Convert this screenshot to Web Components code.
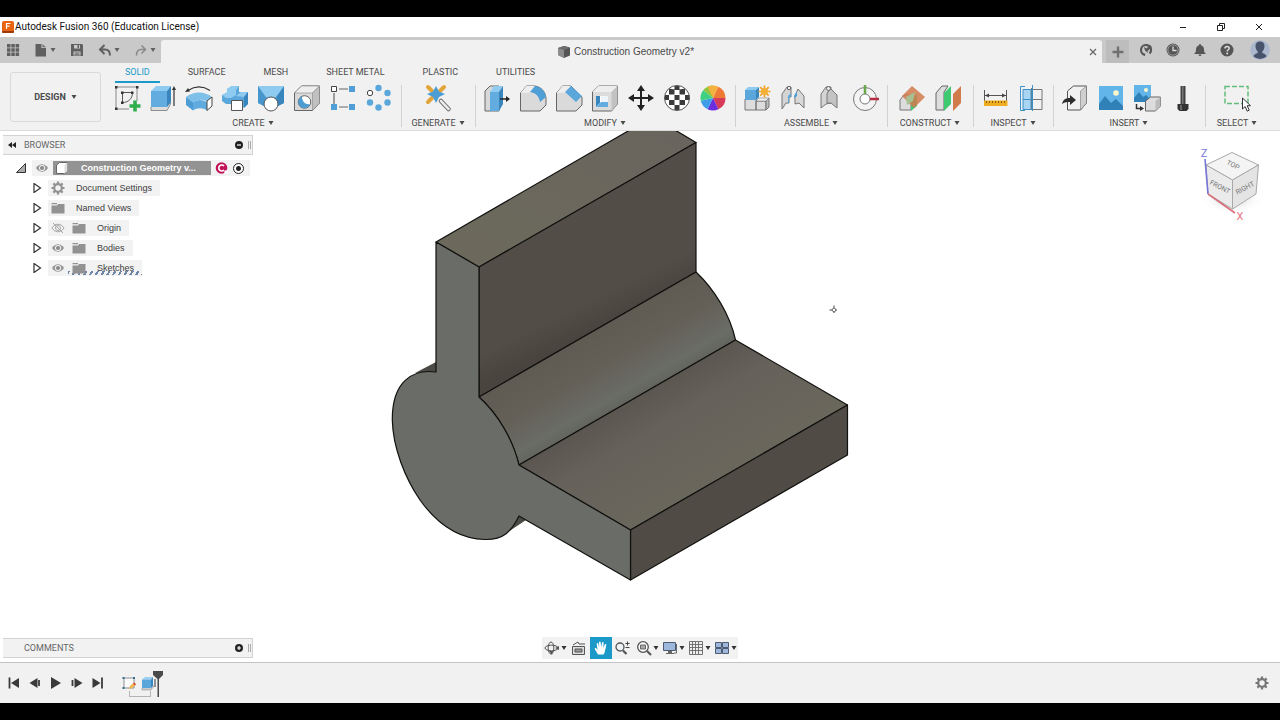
<!DOCTYPE html>
<html lang="en">
<head>
<meta charset="utf-8">
<meta name="viewport" content="width=device-width, initial-scale=1">
<title>Autodesk Fusion 360 (Education License)</title>
<style>
  html, body { margin: 0; height: 100%; }
  body {
    --blue: #1b9ac9; --panel: #f1f1f1; --ink: #4a4a4a;
    font: 9px/16px Roboto, "Liberation Sans", sans-serif;
    color: var(--ink); background: #000;
  }
</style>
</head>
<body>
<fusion-app></fusion-app>

<script>
const ICONS = {
  /* ---- application frame ---- */
  logo: [12, '<rect width="12" height="12" rx="2" fill="#e8640f"/><path d="M0 10h12v1a1 1 0 0 1-1 1H1a1 1 0 0 1-1-1z" fill="#9c3a05"/><path d="M4.500 8V2.500H8.500M4.500 5.200h3" stroke="#fff" stroke-width="1.200" fill="none"/>'],
  min: [12, '<path d="M3 6.500h6" stroke="#222"/>'],
  restore: [12, '<path d="M2.500 4.500h5v5h-5zM4.500 4.500v-2h5v5H7.500" stroke="#222" fill="none"/>'],
  close: [12, '<path d="M3 3l6 6M9 3l-6 6" stroke="#222" fill="none"/>'],
  tabclose: [12, '<path d="M3 3l6 6M9 3l-6 6" stroke="#666" stroke-width="1.200" fill="none"/>'],
  apps: [14, '<g fill="#606060"><path d="M1 1h3.500v3.500H1zM5.300 1h3.500v3.500H5.300zM9.600 1h3.500v3.500H9.600zM1 5.300h3.500v3.500H1zM5.300 5.300h3.500v3.500H5.300zM9.600 5.300h3.500v3.500H9.600zM1 9.600h3.500v3.500H1zM5.300 9.600h3.500v3.500H5.300zM9.600 9.600h3.500v3.500H9.600z"/></g>'],
  file: [14, '<path d="M1.500 1h6v4h4.500v8.500H1.500z" fill="#606060"/><path d="M8.500 1l3.500 3.300H8.500z" fill="#707070"/>'],
  save: [14, '<path fill-rule="evenodd" d="M1 1h11l1 1v11H1zM4 2v3.500h6V2zM3.500 8.500v4h7v-4z" fill="#606060"/><path d="M7.500 2h1.500v3H7.500zM4.500 9.500h5v1h-5zM4.500 11.200h5v1h-5z" fill="#606060"/>'],
  undo: [14, '<path d="M6.500 2L2 6.500 6.500 11M2.500 6.500H7c3.500 0 5 2 5 6" fill="none" stroke="#606060" stroke-width="2"/>'],
  redo: [14, '<path d="M7.500 2.500l4 4-4 4M11 6.500H7c-3 0-4.500 2-4.500 6" fill="none" stroke="#8a8a8a" stroke-width="1.500"/>'],
  doc: [14, '<path d="M1 3l6-2 6 1.500v8L7 13l-6-3z" fill="#555"/><path d="M1 3l6 2v8l-6-3z" fill="#8c8c8c"/><path d="M1 3l6-2 6 1.500L7 5z" fill="#6f6f6f"/>'],
  plus: [14, '<path d="M7 1.500v11M1.500 7h11" stroke="#707070" stroke-width="2.400"/>'],
  ext: [14, '<circle cx="7" cy="7" r="5" fill="none" stroke="#555" stroke-width="2.200" stroke-dasharray="26 5" transform="rotate(100 7 7)"/><path d="M5 4l2.500 1.500L11 2l2 2-4.500 4L9 10 6 7.500z" fill="#555"/>'],
  clock: [14, '<circle cx="7" cy="7" r="6.500" fill="#555"/><circle cx="7" cy="7" r="5.200" fill="none" stroke="#aaa" stroke-width=".8"/><path d="M7 3.500V7.500h3.500" stroke="#ddd" stroke-width="1.300" fill="none"/>'],
  bell: [14, '<path d="M7 1c1 0 1 .8 1 1.200 2 .6 3 2.200 3 4.300 0 2.500.5 3 2 4.500H1c1.500-1.500 2-2 2-4.500 0-2.100 1-3.700 3-4.300C6 1.800 6 1 7 1z" fill="#555"/><path d="M5.500 11.500h3a1.500 1.500 0 0 1-3 0z" fill="#555"/>'],
  help: [14, '<circle cx="7" cy="7" r="6.500" fill="#555"/><path d="M5 5.500C5 2.800 9.200 3 9.200 5.300 9.200 6.800 7.200 6.800 7.200 8.500" stroke="#ddd" stroke-width="1.500" fill="none"/><circle cx="7.200" cy="10.500" r="1" fill="#ddd"/>'],
  avatar: [20, '<circle cx="10" cy="10" r="9.800" fill="#aab7cc"/><path d="M10 1.500c3 0 4.700 2 4.500 4.800-.1 2.300-.8 4-2.200 5.200v1.500c2 .8 3.500 1.500 4.400 3.200A9.700 9.700 0 0 1 3.300 16.200C4.200 14.500 5.700 13.800 7.700 13v-1.500C6.300 10.300 5.600 8.600 5.500 6.300 5.300 3.500 7 1.500 10 1.500z" fill="#46536b"/>'],
  caret: [6, '<path d="M.5 1h5L3 5z" fill="currentColor"/>'],

  /* ---- create ---- */
  sketch: [28, '<path d="M4 3h19M3 4v20M24 4v13M4 25h12" stroke="#888" fill="none"/><path d="M9.500 8.500v10M9.500 8.500h10c0 6-4 10-10 10" stroke="#555" fill="none"/><g fill="#333"><path d="M2 2h2.500v2.500H2zM23 2h2.500v2.500H23zM2 23.500h2.500V26H2zM8 7.500h2.500V10H8zM18 7.500h2.500V10H18zM8 17.500h2.500V20H8z"/></g><path d="M22 16.500v11M16.500 22h11" stroke="#2fae4b" stroke-width="3.600"/>'],
  extrude: [28, '<path d="M2 23l4-4h16l-4 7.500H2z" fill="#ddd" stroke="#777" stroke-width=".8"/><path d="M2 7l5-5h15l-4 5z" fill="#8fcaf0"/><path d="M2 7h16v16H2z" fill="#63ace0"/><path d="M18 7l4-5v16l-4 5z" fill="#3886bd"/><path d="M25 22V5" stroke="#333" stroke-width="1.200"/><path d="M25 2l-2 4h4z" fill="#333"/>'],
  revolve: [28, '<path d="M3 6.500C10 2 18 2 25 6.500" stroke="#333" stroke-width="1.200" fill="none"/><path d="M0 8l3-4 2 3.500z" fill="#333"/><path d="M1 13C8 7 20 7 27 13l-5 5c-4-3-10-3-14 1z" fill="#7fc0ea"/><path d="M1 13l7 5.500v8L1 21z" fill="#4c9dd4"/><path d="M8 18.500c4-3.500 10-3.500 14 0v8c-4-3-10-3-14 0z" fill="#5fabdf"/><path d="M22 17l5-4v9l-5 4.500z" fill="#fff" stroke="#444"/>'],
  sweep: [28, '<path d="M1 11l5-2V5l5-3h7v6h9v12l-5 4h-9l-3-4H5l-4-3z" fill="#5ba6da"/><path d="M1 11l5-3V5l5-3h7l-3 4v5l-5 3H5z" fill="#8fcaf0"/><path d="M15 12l5-4h7l-4 5z" fill="#8fcaf0"/><path d="M23 13l4-5v12l-4 4z" fill="#3886bd"/><path d="M10.500 16.500h11v10h-11z" fill="#fff" stroke="#555"/>'],
  loft: [28, '<path d="M1 2h26v17l-6 3H7l-6-3z" fill="#63ace0"/><path d="M1 2l8 11-2 9-6-3z" fill="#4795cd"/><path d="M27 2l-8 11 2 9 6-3z" fill="#3886bd"/><path d="M1 2h26l-8 11H9z" fill="#8fcaf0"/><circle cx="14" cy="20" r="7" fill="#fff" stroke="#555"/>'],
  hole: [28, '<path d="M1.500 9l7-7h18v17l-7 7.500h-18z" fill="#d9d9d9" stroke="#666"/><path d="M1.500 9l7-7h18l-7 7z" fill="#eee" stroke="#888" stroke-width=".6"/><path d="M19.500 9l7-7v17l-7 7.500z" fill="#c0c0c0" stroke="#888" stroke-width=".6"/><circle cx="11.500" cy="18" r="6.300" fill="#fff" stroke="#666"/><path d="M9 12.500a6 6 0 1 0 8 7.500c-4 1-8-2-8-7.500z" fill="#4c9dd4"/>'],
  rectpat: [28, '<path d="M5 9v11M10 5h9M10 23h9" stroke="#666" stroke-width="1.200"/><path d="M2.500 2.500h5v5h-5z" fill="#fff" stroke="#444"/><path d="M20 2h6v6h-6zM2 20h6v6H2zM20 20h6v6h-6z" fill="#4f9fd6"/>'],
  circpat: [28, '<g fill="#5ba6da"><circle cx="13.500" cy="4" r="3.200"/><circle cx="22.500" cy="9" r="3.200"/><circle cx="22.500" cy="18.500" r="3.200"/><circle cx="13.500" cy="23.500" r="3.200"/><circle cx="5" cy="18.500" r="3.200"/></g><circle cx="5" cy="9" r="2.700" fill="#fff" stroke="#444"/>'],
  /* ---- generate ---- */
  wand: [28, '<path d="M4 3l4 4M20 3l-4 4M4 18l4-4" stroke="#e3a43a" stroke-width="4" stroke-linecap="round"/><path d="M12 2l3 5.500L21 10l-6 3-3 6-3-6-6-3 6-2.500z" fill="#4c9dd4"/><path d="M17 17l7.500 8" stroke="#777" stroke-width="4.500" stroke-linecap="round"/><path d="M17 17l7.500 8" stroke="#eee" stroke-width="2.500" stroke-linecap="round"/>'],
  /* ---- modify ---- */
  presspull: [28, '<path d="M2 7l5-5h9v25H2z" fill="#d8d8d8" stroke="#666"/><path d="M7 8l4-6h9l-4 6z" fill="#8fcaf0"/><path d="M7 8h9v19H7z" fill="#63ace0"/><path d="M16 8l4-6v18l-4 7z" fill="#3886bd"/><path d="M17 15h7" stroke="#222" stroke-width="1.500"/><path d="M23 12l4 3-4 3z" fill="#222"/>'],
  fillet: [28, '<path d="M1.500 9l6-7H16c6 1 10 5 11 12v7l-6 6H1.500z" fill="#dadada" stroke="#666"/><path d="M1.500 9l6-7H16l-5 6.500z" fill="#eee"/><path d="M11 8l5-6c6 1 10 5 11 11l-6 5c-1-6-4-9-10-10z" fill="#4f9fd6"/>'],
  chamfer: [28, '<path d="M1.500 9l6-7H16l11 11v8l-6 6H1.500z" fill="#dadada" stroke="#666"/><path d="M1.500 9l6-7H16l-5 6.500z" fill="#eee"/><path d="M10 8l6-6 11 10-6 6z" fill="#5ba6da"/>'],
  shell: [28, '<path d="M1.500 8l6-6h19v18l-6 7h-19z" fill="#dcdcdc" stroke="#666"/><path d="M1.500 8l6-6h19l-6 6z" fill="#eee"/><path d="M20.500 8l6-6v18l-6 7z" fill="#c2c2c2"/><path d="M5 12h12v11H5z" fill="#fff"/><path d="M5 12h4v7l-4 4z" fill="#3886bd"/><path d="M5 23l5-5h7v5z" fill="#63ace0"/><path d="M10 12h7v6h-7z" fill="#eef5fa"/>'],
  move: [28, '<path d="M14 4v20M4 14h20" stroke="#222" stroke-width="2"/><path d="M14 1l-4 6h8zM14 27l-4-6h8zM1 14l6-4v8zM27 14l-6-4v8z" fill="#222"/>'],
  checker: [28, '<circle cx="14" cy="14" r="12.500" fill="#fff"/><path d="M11.500 2h5v4h-5zM6 4.500l5.500 1v5H6zM16.500 5.500l5.500-1v6h-5.500zM11.500 11h5v5h-5zM2 11h4v5H2zM22 11h4.500v5H22zM6 16h5.500v5H6zM16.500 16H22v5h-5.500zM11.500 21h5v5h-5z" fill="#3b3b3b"/><circle cx="14" cy="14" r="12.500" fill="none" stroke="#555"/>'],
  wheel: [28, '<g><path d="M14 14V1.500A12.500 12.500 0 0 0 4.200 6.200z" fill="#8fc63f"/><path d="M14 14L8.600 2.700a12.500 12.500 0 0 1 10.800 0z" fill="#f5b13d"/><path d="M14 14l5.400-11.300A12.500 12.500 0 0 1 26.500 14z" fill="#ee7a35"/><path d="M14 14h12.500a12.500 12.500 0 0 1-7.100 11.300z" fill="#d63b59"/><path d="M14 14l5.400 11.300a12.500 12.500 0 0 1-10.800 0z" fill="#6a2de0"/><path d="M14 14L8.600 25.300A12.500 12.500 0 0 1 1.800 16.800z" fill="#3f9ce8"/><path d="M14 14L1.800 16.800A12.500 12.500 0 0 1 4.200 6.200z" fill="#3ed183"/></g>'],
  /* ---- assemble ---- */
  newcomp: [28, '<path d="M2 15h11v11H2zM13 17h10v9H13z" fill="#ddd" stroke="#777"/><path d="M23 17l3-3v9l-3 3z" fill="#bbb" stroke="#777"/><path d="M13 17l3-3h10l-3 3z" fill="#f3f3f3" stroke="#777" stroke-width=".6"/><path d="M2 6l3-3h11l-3 3z" fill="#8fcaf0"/><path d="M2 6h11v10H2z" fill="#5ba6da"/><path d="M13 6l3-3v10l-3 3z" fill="#3886bd"/><path d="M21.500 1.500v12M15.500 7.500h12M17.200 3.200l8.500 8.500M25.700 3.200l-8.500 8.500" stroke="#eda22c" stroke-width="1.700"/><circle cx="21.500" cy="7.500" r="3.500" fill="#f3b038"/>'],
  joint: [28, '<path d="M3 10l5-7h4v10h-2v6H7l-4 6z" fill="#d4d4d4" stroke="#777"/><path d="M9 12l3-3v4h-2v6H9z" fill="#5ba6da"/><path d="M16 12l3-7 6 7v12l-5-5-4 1z" fill="#d8d8d8" stroke="#777"/><path d="M15 12l3-5v5l-3 2z" fill="#4f9fd6"/><circle cx="10" cy="4" r="1.700" fill="#eee" stroke="#666"/>'],
  asbuilt: [28, '<path d="M6 10l5-7h5v16l-5 1-5 4z" fill="#d4d4d4" stroke="#777"/><path d="M15 4l7 7v13l-6-5h-4v-9z" fill="#c4c4c4" stroke="#777"/><circle cx="13.500" cy="4.500" r="2" fill="#eee" stroke="#666"/>'],
  jorigin: [28, '<circle cx="14" cy="15" r="11.500" fill="#f4f4f4" stroke="#777"/><circle cx="14" cy="15" r="5" fill="#fff" stroke="#777"/><path d="M14 1v9" stroke="#69a84b" stroke-width="2.500"/><path d="M19 15h9" stroke="#b52f41" stroke-width="2.500"/>'],
  /* ---- construct ---- */
  offset: [28, '<path d="M2 16l4-5h10l-3 5v10H2z" fill="#ddd" stroke="#777"/><path d="M13 16l6-6v12l-6 5z" fill="#45c878"/><path d="M14 2L27 13 16 24 4 12z" fill="#d17a4b" fill-opacity=".85"/><path d="M8 13l9-5-2 9-6 4z" fill="#a7bf91"/>'],
  midplane: [28, '<path d="M2 9l6-7h6l-4 6v18H2z" fill="#ddd" stroke="#666"/><path d="M10 9l7-7v18l-7 7z" fill="#3fca72"/><path d="M19 10l8-8v17l-8 8z" fill="#d17a4b"/>'],
  /* ---- inspect ---- */
  measure: [28, '<path d="M3.500 6v11M25.500 6v11M4 11.500h21" stroke="#555"/><path d="M4 11.500l4-2v4zM25 11.500l-4-2v4z" fill="#444"/><path d="M3 16.500h23.500v5.500H3z" fill="#efae22"/><path d="M5 18h20" stroke="#8c5c00" stroke-width="2" stroke-dasharray="1 2"/>'],
  section: [28, '<path d="M12 5.500h13v20H12M12 15.500h13M14.500 4v22" stroke="#777" fill="none"/><path d="M6 5h8v21H6z" fill="#a9d5f3"/><path d="M8 2.500H3.500v24H8M6 5.500h8v20H6zM6 15.500h8M15.500 1v26" stroke="#3b91c8" fill="none"/>'],
  /* ---- insert ---- */
  derive: [28, '<path d="M6.500 7l6-5h13v17l-6 7H6.500z" fill="#f1f1f1" stroke="#555"/><path d="M19.500 7l6-5v17l-6 7z" fill="#cfcfcf" stroke="#777" stroke-width=".6"/><path d="M1 20c1-4 3-6 8-6v-3l6 5-6 5v-3c-3 0-5 0-8 2z" fill="#2e2e2e"/>'],
  canvas: [28, '<path d="M2 2h24v24H2z" fill="#61b5e8"/><path d="M2 20l6-8 6 7 5-4 7 7v4H2z" fill="#2f81b8"/><circle cx="19" cy="9" r="2.800" fill="#fff5cb"/>'],
  decal: [28, '<path d="M1 1h17v17H1z" fill="#61b5e8"/><path d="M1 14l5-6 4 5 3-2 5 5v2H1z" fill="#2f81b8"/><circle cx="13" cy="6" r="2" fill="#fff5cb"/><path d="M12.500 17l5-4h10v9l-5 5h-10z" fill="#ddd" stroke="#666"/><path d="M22.500 17l5-4v9l-5 5z" fill="#bbb"/><path d="M3.500 20v4.500H8" stroke="#333" stroke-width="1.500" fill="none"/><path d="M7 22l4 2.500L7 27z" fill="#333"/>'],
  bolt: [28, '<path d="M11.500 2h5v18h-5z" fill="#414141"/><path d="M13 2h1.500v18H13z" fill="#777"/><path d="M8.500 20h11v5l-2 2h-7l-2-2z" fill="#333"/><path d="M11 21h2v5h-2z" fill="#666"/>'],
  select: [28, '<path d="M2 2.500h23v17H2z" fill="none" stroke="#63bd7b" stroke-width="1.500" stroke-dasharray="5 2"/><path d="M19.500 14v11l2.700-2.500 2 4.700 2-1-2-4.500h3.300z" fill="#fff" stroke="#333"/>'],

  /* ---- browser ---- */
  collapse: [10, '<path d="M5 2v6L1 5zM9 2v6L5 5z" fill="#222"/>'],
  minus: [8, '<circle cx="4" cy="4" r="4" fill="#222"/><path d="M2 4h4" stroke="#fff" stroke-width="1.200"/>'],
  add: [8, '<circle cx="4" cy="4" r="4" fill="#222"/><path d="M2 4h4M4 2v4" stroke="#fff" stroke-width="1.200"/>'],
  grip: [8, '<path d="M4.500 0v8M6.500 0v8" stroke="#aaa"/>'],
  open: [10, '<path d="M9.500.5v9H.5z" fill="#aaa" stroke="#333"/>'],
  closed: [10, '<path d="M2 .500L8.500 5 2 9.500z" fill="#fff" stroke="#333" stroke-width="1.200"/>'],
  eye: [14, '<path d="M1 7c3-5 9-5 12 0-3 5-9 5-12 0z" fill="#999"/><circle cx="7" cy="7" r="3" fill="#f2f2f2"/><circle cx="7" cy="7" r="2" fill="#888"/>'],
  hidden: [14, '<path d="M1 7c3-5 9-5 12 0-3 5-9 5-12 0z" fill="none" stroke="#a5a5a5"/><circle cx="7" cy="7" r="2.500" fill="none" stroke="#a5a5a5"/><path d="M2 2l10 10" stroke="#a5a5a5"/>'],
  folder: [14, '<path d="M.5 2h5.500v1.200H.5zM7 3h6.500v9.500H.5V4.500h5.500z" fill="#929292"/>'],
  gear: [14, '<circle cx="7" cy="7" r="3.800" fill="none" stroke="currentColor" stroke-width="2.200"/><path d="M7 .5v2.500M7 11v2.500M.5 7H3M11 7h2.500M2.400 2.400l1.800 1.800M9.800 9.800l1.800 1.800M2.400 11.600l1.800-1.800M9.800 4.200l1.800-1.800" stroke="currentColor" stroke-width="2.200"/>'],
  body: [14, '<path d="M1.500 4l3-2.500h8V10l-3 2.500h-8z" fill="#fff" stroke="#666"/><path d="M9.500 4l3-2.500V10l-3 2.500z" fill="#ddd"/>'],
  cbadge: [14, '<circle cx="6.500" cy="7" r="5.800" fill="#c0135a"/><path d="M9 5a3 3 0 1 0 0 4" stroke="#fff" stroke-width="1.600" fill="none"/><circle cx="11" cy="11" r="1.800" fill="#fff"/>'],

  /* ---- navigation ---- */
  orbit: [16, '<ellipse cx="7.500" cy="8" rx="6.500" ry="2.800" fill="none" stroke="#555"/><ellipse cx="7" cy="8" rx="2.800" ry="6" fill="none" stroke="#555"/><path d="M11 8l4-2v4zM5 11l3 4 1-4z" fill="#555"/>'],
  lookat: [16, '<path d="M1.500 6.500h12v8h-12z" fill="#ddd" stroke="#555"/><path d="M4 9h7v3H4z" fill="#999" stroke="#555"/><path d="M2 5l5-3 1 2h6" stroke="#555" fill="none"/>'],
  hand: [16, '<path d="M5 14.500L2 9.500c-.8-1.400.7-1.900 1.400-1L4.500 10 3.700 4c-.1-1.300 1.300-1.500 1.600-.3L6.200 7.500 6 2.500c0-1.300 1.600-1.300 1.700 0L8.200 7.300 9 2.700c.2-1.200 1.700-1 1.600.2L10.300 8l1.500-3.500c.5-1.100 1.800-.6 1.500.5L12 11c-.3 1.500-.7 2.500-1.500 3.500z" fill="#fff"/>'],
  zoom: [16, '<circle cx="5" cy="7" r="4" fill="#eef3f8" stroke="#555" stroke-width="1.300"/><path d="M8 10.500L11.500 14" stroke="#555" stroke-width="2.200"/><path d="M10.500 3.500h4M12.500 1.500v4M10.500 7.500h4" stroke="#444"/>'],
  window: [16, '<circle cx="7" cy="7" r="5.300" fill="#fff" stroke="#555" stroke-width="1.300"/><path d="M4.500 5h5v4h-5z" fill="#aaa" stroke="#666"/><path d="M11 11l4 4" stroke="#555" stroke-width="2.200"/>'],
  display: [16, '<path d="M1.500 2.500h12v8h-12z" fill="#9eb7dc" stroke="#4d5a70"/><path d="M6 11h4v2h2v1H4v-1h2z" fill="#666"/><path d="M14.500 4v9H12" stroke="#666" fill="none"/>'],
  grid: [16, '<path d="M2 2h13v13H2z" fill="#eee"/><path d="M1.500 1.500h13v13h-13zM4.500 1.500v13M7.500 1.500v13M10.500 1.500v13M1.500 4.500h13M1.500 7.500h13M1.500 10.500h13" stroke="#666" fill="none" stroke-width=".9"/>'],
  views: [16, '<path d="M1.500 2.500h6v5h-6zM8.500 2.500h6v5h-6zM1.500 8.500h6v5h-6zM8.500 8.500h6v5h-6z" fill="#9eb7dc" stroke="#4d5a70"/>'],

  /* ---- timeline ---- */
  first: [14, '<path d="M2.500 1.500v11" stroke="#3a3a3a" stroke-width="1.800"/><path d="M12 2v10L4 7z" fill="#3a3a3a"/>'],
  prev: [14, '<path d="M9.500 2v10L1.500 7z" fill="#3a3a3a"/><path d="M11 4v6" stroke="#3a3a3a" stroke-width="1.800"/>'],
  play: [14, '<path d="M2 1v12l10-6z" fill="#3a3a3a"/>'],
  next: [14, '<path d="M4.500 2v10l8-5z" fill="#3a3a3a"/><path d="M2.500 4v6" stroke="#3a3a3a" stroke-width="1.800"/>'],
  last: [14, '<path d="M11 1.500v11" stroke="#3a3a3a" stroke-width="1.800"/><path d="M1.500 2v10l8-5z" fill="#3a3a3a"/>'],
  tsketch: [16, '<path d="M3 3h10v10H3z" fill="#fafafa" stroke="#777" stroke-width=".8"/><path d="M1.500 2h2v2h-2zM12 2h2v2h-2zM1.500 12h2v2h-2z" fill="#31708f"/><path d="M8 14l1-3 3.500-3 2 2-3.500 3z" fill="#f0b54c"/><path d="M12 8.500l1.500-1 1.500 2-1.200 1z" fill="#d9432f"/>'],
  textrude: [16, '<path d="M1 13l3-2h9l-3 4H1z" fill="#ccc" stroke="#888" stroke-width=".5"/><path d="M1 4.500L4 2h8L10 4.500z" fill="#9ad0f2"/><path d="M1 4.500h9V13H1z" fill="#5ba6da"/><path d="M10 4.500L12 2v8.500L10 13z" fill="#3886bd"/><path d="M14 4v8" stroke="#333"/>']
};

function define(tag, css, render) {
  customElements.define(tag, class extends HTMLElement {
    connectedCallback() {
      if (this.shadowRoot) return;
      const root = this.attachShadow({ mode: "open" });
      const reset = "*{box-sizing:border-box} button{font:inherit;color:inherit;background:none;border:0;padding:0;margin:0;display:flex;align-items:center;justify-content:center} a{color:inherit;text-decoration:none}";
      root.innerHTML = `<style>${reset}${css}</style>${render(this)}`;
    }
  });
}

define("fx-icon", ":host{display:block;flex:none} svg{display:block}", el => {
  const [box, art] = ICONS[el.getAttribute("name")];
  return `<svg width="${box}" height="${box}" viewBox="0 0 ${box} ${box}" aria-hidden="true">${art}</svg>`;
});

define("title-bar", `
  :host{display:flex;align-items:center;height:20px;background:#fff;color:#111;padding:0 2px;gap:1px;font:10px/20px Roboto,sans-serif}
  h1{font:inherit;margin:0;flex:1}
  .controls{display:flex}
  button{width:38px;height:20px}
`, () => `
  <fx-icon name="logo"></fx-icon><h1>Autodesk Fusion 360 (Education License)</h1>
  <div class="controls">
    <button aria-label="Minimize"><fx-icon name="min"></fx-icon></button>
    <button aria-label="Restore"><fx-icon name="restore"></fx-icon></button>
    <button aria-label="Close"><fx-icon name="close"></fx-icon></button>
  </div>`);

define("document-bar", `
  :host{display:flex;height:26px;padding-top:3px;background:#c9c9c9;color:#606060}
  .quick{display:flex;align-items:center;gap:14px;width:161px;padding:0 6px 3px}
  .quick button{gap:2px}
  .tab{flex:1;display:flex;align-items:center;background:var(--panel);border-radius:3px 3px 0 0;padding:0 3px}
  .name{flex:1;display:flex;align-items:center;justify-content:center;gap:3px;font:10px/20px "Liberation Sans",sans-serif;color:#4a4a4a}
  .account{display:flex;align-items:center;gap:13px;padding:0 10px 3px 4px}
  .new{width:23px;height:23px;background:#bdbdbd;margin:0 -3px -3px 0}
  .profile{margin-left:3px}
`, () => `
  <div class="quick">
    <button aria-label="Data panel"><fx-icon name="apps"></fx-icon></button>
    <button aria-label="File"><fx-icon name="file"></fx-icon><fx-icon name="caret"></fx-icon></button>
    <button aria-label="Save"><fx-icon name="save"></fx-icon></button>
    <button aria-label="Undo"><fx-icon name="undo"></fx-icon><fx-icon name="caret"></fx-icon></button>
    <button aria-label="Redo"><fx-icon name="redo"></fx-icon><fx-icon name="caret"></fx-icon></button>
  </div>
  <div class="tab">
    <span class="name"><fx-icon name="doc"></fx-icon>Construction Geometry v2*</span>
    <button aria-label="Close document"><fx-icon name="tabclose"></fx-icon></button>
  </div>
  <div class="account">
    <button class="new" aria-label="New design"><fx-icon name="plus"></fx-icon></button>
    <button aria-label="Extensions"><fx-icon name="ext"></fx-icon></button>
    <button aria-label="Job status"><fx-icon name="clock"></fx-icon></button>
    <button aria-label="Notifications"><fx-icon name="bell"></fx-icon></button>
    <button aria-label="Help"><fx-icon name="help"></fx-icon></button>
    <button class="profile" aria-label="Profile"><fx-icon name="avatar"></fx-icon></button>
  </div>`);

define("tool-group", `
  :host{display:flex;flex-direction:column;align-items:center;min-width:var(--group-width,0);padding:0 4px;
    background:linear-gradient(#d2d2d2,#d2d2d2) 0 2px/1px 42px no-repeat}
  :host([first]){background:none;padding:0 4px 0 0}
  .tools{display:flex}
  .tools button{width:36px;height:30px}
  .menu{height:20px;gap:3px}
`, el => `
  <div class="tools">${el.getAttribute("tools").split(" ").map(t => `<button aria-label="${t}"><fx-icon name="${t}"></fx-icon></button>`).join("")}</div>
  <button class="menu" aria-haspopup="menu"><slot></slot><fx-icon name="caret"></fx-icon></button>`);

define("tool-ribbon", `
  :host{display:flex;height:68px;background:var(--panel);border-bottom:1px solid #dcdcdc}
  .space{width:109px;padding:9px 8px 0 10px;flex:none}
  .space button{width:100%;height:50px;border:1px solid #d9d9d9;border-radius:3px;font-weight:bold;gap:5px}
  nav{display:flex;gap:18px;padding-left:6px;height:20px}
  nav a{padding:1px 10px 0;height:20px;border-bottom:2px solid transparent}
  nav a[aria-current]{color:var(--blue);border-color:var(--blue)}
  .groups{display:flex}
`, () => `
  <div class="space"><button aria-haspopup="menu">DESIGN <fx-icon name="caret"></fx-icon></button></div>
  <div>
    <nav><a href="#solid" aria-current="page">SOLID</a><a href="#surface">SURFACE</a><a href="#mesh">MESH</a><a href="#sheet">SHEET METAL</a><a href="#plastic">PLASTIC</a><a href="#utilities">UTILITIES</a></nav>
    <div class="groups">
      <tool-group first tools="sketch extrude revolve sweep loft hole rectpat circpat">CREATE</tool-group>
      <tool-group style="--group-width:74px" tools="wand">GENERATE</tool-group>
      <tool-group tools="presspull fillet chamfer shell move checker wheel">MODIFY</tool-group>
      <tool-group tools="newcomp joint asbuilt jorigin">ASSEMBLE</tool-group>
      <tool-group style="--group-width:86px" tools="offset midplane">CONSTRUCT</tool-group>
      <tool-group tools="measure section">INSPECT</tool-group>
      <tool-group tools="derive canvas decal bolt">INSERT</tool-group>
      <tool-group style="--group-width:64px" tools="select">SELECT</tool-group>
    </div>
  </div>`);

define("palette-header", `
  :host{display:flex;align-items:center;height:20px;background:#f2f2f2;border:1px solid #d2d2d2;border-width:1px 1px 1px 0;padding:0 0 0 4px;color:#666}
  .mark{width:10px;margin-right:7px}
  h2{font:inherit;margin:0;flex:1}
  fx-icon[name=grip]{margin-left:1px}
`, el => `
  <span class="mark">${el.hasAttribute("collapsible") ? '<button aria-label="Collapse"><fx-icon name="collapse"></fx-icon></button>' : ""}</span>
  <h2><slot></slot></h2>
  <button aria-label="Toggle"><fx-icon name="${el.getAttribute("action")}"></fx-icon></button>
  <fx-icon name="grip"></fx-icon>`);

define("tree-item", `
  :host{display:flex;align-items:center;height:20px;gap:6px;padding-left:29px;font:9px/16px "Liberation Sans",sans-serif}
  .chip{display:flex;align-items:center;gap:7px;height:16px;padding:0 8px 0 3px;background:#f2f2f2;color:#3c3c3c}
  .icons{display:flex;gap:7px;color:#929292}
  .label{padding-left:4px}
  :host([root]){padding-left:13px}
  :host([root]) .chip{gap:4px;padding:0 4px 0 3px}
  .hot{display:flex;align-items:center;width:158px;height:14px;gap:12px;padding:0 2px;background:#939393;color:#fff;font-weight:bold;white-space:nowrap;overflow:hidden}
  input{appearance:none;width:11px;height:11px;margin:0 2px 0 0;border:1px solid #222;border-radius:50%;background:radial-gradient(#222 0 2px,#fff 3px)}
  .chip.hatched{background:repeating-linear-gradient(120deg,#6e86a8 0 2px,transparent 2px 5px) 20px 11px/80px 4px no-repeat,#f2f2f2}
`, el => {
  if (el.hasAttribute("root")) return `
    <button aria-label="Collapse"><fx-icon name="open"></fx-icon></button>
    <div class="chip"><button aria-label="Visibility"><fx-icon name="eye"></fx-icon></button>
      <span class="hot"><fx-icon name="body"></fx-icon><slot></slot></span>
      <fx-icon name="cbadge"></fx-icon><input type="radio" checked aria-label="Activate component"></div>`;
  return `<button aria-label="Expand"><fx-icon name="closed"></fx-icon></button>
    <div class="chip ${el.hasAttribute("hatched") ? "hatched" : ""}">
      <span class="icons">${el.getAttribute("icons").split(" ").map(i => `<fx-icon name="${i}"></fx-icon>`).join("")}</span>
      <span class="label"><slot></slot></span></div>`;
});

define("model-view", ":host{display:block;min-width:0;min-height:0;overflow:hidden} svg{display:block;width:100%;height:100%}", () => `
  <svg viewBox="0 131 1280 531" role="img" aria-label="Solid body">
    <defs>
      <linearGradient id="round" gradientUnits="userSpaceOnUse" x1="587" y1="334" x2="627" y2="403">
        <stop offset="0" stop-color="#5f5b53"/><stop offset=".45" stop-color="#646058"/><stop offset=".85" stop-color="#6a6c66"/><stop offset="1" stop-color="#63645e"/>
      </linearGradient>
      <linearGradient id="wall" gradientUnits="userSpaceOnUse" x1="550" y1="225" x2="600" y2="327">
        <stop offset="0" stop-color="#524e47"/><stop offset=".75" stop-color="#524e47"/><stop offset="1" stop-color="#49453e"/>
      </linearGradient>
      <linearGradient id="floor" gradientUnits="userSpaceOnUse" x1="627" y1="403" x2="690" y2="510">
        <stop offset="0" stop-color="#5b564f"/><stop offset=".3" stop-color="#66625b"/><stop offset="1" stop-color="#6a675c"/>
      </linearGradient>
      <linearGradient id="cap" x1="0" y1="1" x2="1" y2="0">
        <stop offset="0" stop-color="#6c6a5c"/><stop offset="1" stop-color="#69645d"/>
      </linearGradient>
    </defs>
    <g stroke="#11110f" stroke-width="1.200" stroke-linejoin="round">
      <path d="M415 373L436 362V372zM505 534L519 516 526 520z" fill="#4c4a46" stroke="none"/>
      <path d="M436 242L635 127H670L696 142.500 479 267z" fill="url(#cap)"/>
      <path d="M479 267L696 142.500V272L479 397z" fill="url(#wall)"/>
      <path d="M479 397L696 272C715 290 730 315 735.500 340L519 465C513 440 498 414 479 397z" fill="url(#round)"/>
      <path d="M519 465L735.500 340 847.500 405 630.500 530z" fill="url(#floor)"/>
      <path d="M630.500 530L847.500 405V455L630.500 580z" fill="#504b44"/>
      <path d="M436 242L479 267V397C498 414 513 440 519 465L630.500 530V580L519 516C511 532 503 540 485 539.500 462 539 440 528 420 500 405 478 393 448 392.300 420 392 380 414 369 436 372z" fill="#6a6c67"/>
    </g>
    <path d="M834 305.500v9M829.500 310h9" stroke="#444" stroke-dasharray="3 1.500"/><circle cx="834" cy="310" r="1.800" fill="#fff" stroke="#555" stroke-width=".8"/>
  </svg>`);

define("view-cube", `:host{display:block} svg{display:block} text{font:7px/8px Roboto,sans-serif;fill:#777;text-anchor:middle}
  .axis{font-size:11px}`, () => `
  <svg width="100" height="100" viewBox="0 0 100 100" role="img" aria-label="View cube">
    <defs><radialGradient id="shade"><stop offset="0" stop-color="#ccc"/><stop offset="1" stop-color="#fff" stop-opacity="0"/></radialGradient></defs>
    <ellipse cx="52" cy="66" rx="32" ry="14" fill="url(#shade)"/>
    <g stroke="#a9a9a9" stroke-linejoin="round"><path d="M52 18.500L78.500 31 52.500 46 26 31z" fill="#f4f4f4"/><path d="M26 31L52.500 46V75L28 60z" fill="#ebebeb"/><path d="M78.500 31L52.500 46V75L76 60z" fill="#e4e4e4"/></g>
    <path d="M25 25L28 60" stroke="#7674d6" stroke-width="1.600"/><path d="M28 60L55 79" stroke="#d8707b" stroke-width="1.600"/>
    <text class="axis" x="24" y="23" style="fill:#7a78dc">Z</text><text class="axis" x="60" y="86" style="fill:#e57b85">X</text>
    <text transform="translate(52 33) rotate(27)">TOP</text><text transform="translate(39 55) rotate(27)">FRONT</text><text transform="translate(66 56) rotate(-28)">RIGHT</text>
  </svg>`);

define("nav-bar", `
  :host{display:flex;height:22px;background:#f2f2f2;color:#333}
  button{width:22px;height:22px}
  .drop{width:26px;gap:1px}
  .on{background:var(--blue)}
`, () => [["orbit",1],["lookat"],["hand",0,1],["zoom"],["window",1],["display",1],["grid",1],["views",1]].map(([n, d, on]) =>
  `<button class="${d ? "drop" : ""} ${on ? "on" : ""}" aria-label="${n}"><fx-icon name="${n}"></fx-icon>${d ? '<fx-icon name="caret"></fx-icon>' : ""}</button>`).join(""));

define("design-canvas", `
  :host{display:grid;grid-template:minmax(0,1fr)/minmax(0,1fr);background:#fff;min-height:0}
  model-view,.side,view-cube,nav-bar{grid-area:1/1}
  .side{justify-self:start;width:250px;margin:4px 0 4px 3px;display:flex;flex-direction:column;justify-content:space-between}
  .tree{padding-top:3px}
  view-cube{justify-self:end;align-self:start;margin-top:3px}
  nav-bar{justify-self:center;align-self:end;margin-bottom:3px}
`, () => `
  <model-view></model-view>
  <div class="side">
    <section><palette-header collapsible action="minus">BROWSER</palette-header>
      <div class="tree">
        <tree-item root>Construction Geometry v...</tree-item>
        <tree-item icons="gear">Document Settings</tree-item>
        <tree-item icons="folder">Named Views</tree-item>
        <tree-item icons="hidden folder">Origin</tree-item>
        <tree-item icons="eye folder">Bodies</tree-item>
        <tree-item icons="eye folder" hatched>Sketches</tree-item>
      </div></section>
    <palette-header action="add">COMMENTS</palette-header>
  </div>
  <view-cube></view-cube>
  <nav-bar></nav-bar>`);

define("time-line", `
  :host{display:flex;align-items:center;height:41px;background:var(--panel);border-top:1px solid #c4c4c4;padding:0 11px 0 7px;color:#777}
  .play{display:flex;gap:7px;margin-right:16px}
  .steps{display:flex;gap:4px;position:relative;flex:1}
  .steps::after{content:"";position:absolute;left:8px;top:16px;width:20px;height:5px;border:1px solid #b5b5b5;border-top:0}
  .marker{position:absolute;left:32px;top:-5px}
`, () => `
  <div class="play">${["first","prev","play","next","last"].map(n => `<button aria-label="${n}"><fx-icon name="${n}"></fx-icon></button>`).join("")}</div>
  <div class="steps"><button aria-label="Sketch1"><fx-icon name="tsketch"></fx-icon></button><button aria-label="Extrude1"><fx-icon name="textrude"></fx-icon></button>
    <svg class="marker" width="10" height="28" viewBox="0 0 10 28" aria-hidden="true"><path d="M0 1h10v4L6 9v18H4.500V9L0 5z" fill="#4a4a4a"/></svg></div>
  <button aria-label="Preferences"><fx-icon name="gear"></fx-icon></button>`);

define("fusion-app", `
  :host{display:flex;flex-direction:column;height:100vh;padding:17px 0;box-sizing:border-box;background:#000}
  design-canvas{flex:1}
  title-bar,document-bar,tool-ribbon,time-line{flex:none;box-sizing:border-box}
`, () => `<title-bar></title-bar><document-bar></document-bar><tool-ribbon></tool-ribbon><design-canvas></design-canvas><time-line></time-line>`);
</script>
</body>
</html>
